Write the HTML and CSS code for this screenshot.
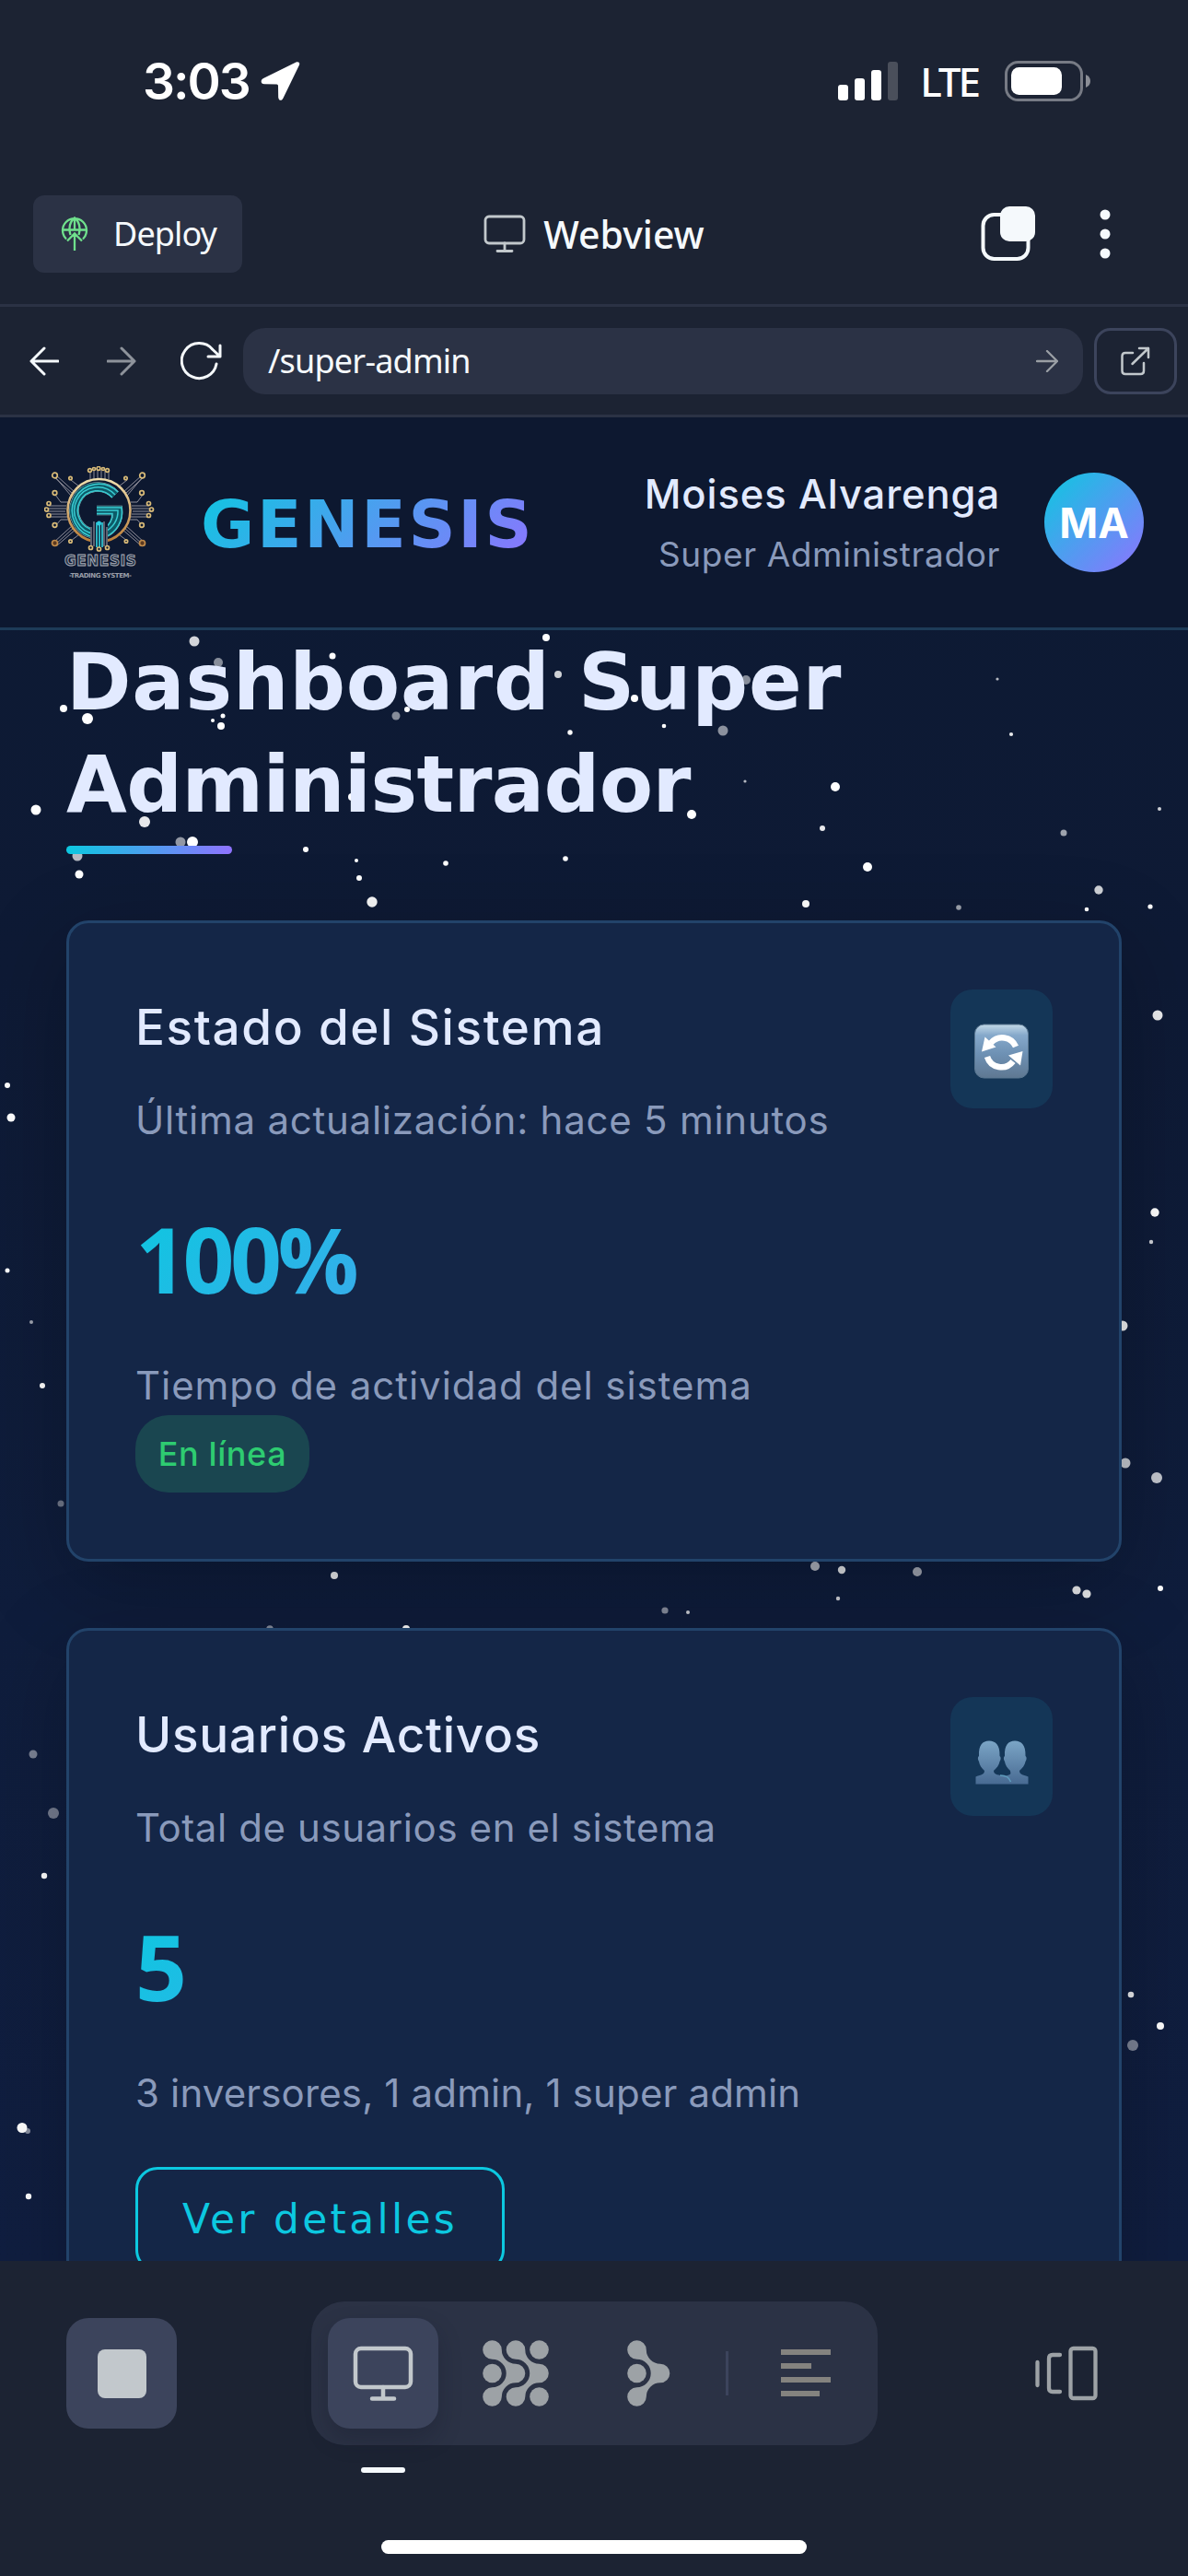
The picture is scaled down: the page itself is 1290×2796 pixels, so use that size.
FILE: index.html
```html
<!DOCTYPE html>
<html lang="es">
<head>
<meta charset="utf-8">
<title>Genesis - Super Admin</title>
<link rel="stylesheet" href="styles.css">
</head>
<body>
<div class="screen">
  <div class="status">
    <span class="time">3:03</span>
    <svg class="locate" width="44" height="44" viewBox="0 0 44 44"><path d="M42 4.500C43 2 41 .5 38.500 1.500L3 19C-.5 21 0 25 4 25.200L17.500 25.500Q19 25.500 19 27L19.200 39.500C19.500 43.500 23 44 24.500 40.500Z" fill="#fff"/></svg>
    <svg class="signal" width="66" height="42" viewBox="0 0 66 42"><g fill="#fff"><rect x="0" y="25" width="11" height="17" rx="3"/><rect x="18" y="18" width="11" height="24" rx="3"/><rect x="36" y="9" width="11" height="33" rx="3"/></g><rect x="54" y="0" width="11" height="42" rx="3" fill="#4a4f5b"/></svg>
    <span class="lte">LTE</span>
    <svg class="battery" width="94" height="44" viewBox="0 0 94 44"><rect x="1.500" y="1.500" width="82" height="41" rx="13" fill="none" stroke="#777b85" stroke-width="3"/><rect x="7" y="7" width="55" height="30" rx="8.500" fill="#fff"/><path d="M88 15q5 2 5 7t-5 7z" fill="#8b8e96"/></svg>
  </div>

  <div class="topbar">
    <div class="deploy">
      <svg width="30" height="38" viewBox="0 0 30 38" fill="none" stroke="#6fe08c" stroke-width="2.300"><path d="M6 24.500A13 13 0 1 1 24 24.500M1.500 14.500H28.500M10.500 20C8.500 13 9.500 6 15 1.500C20.500 6 21.500 13 19.500 20M15 1.500V14M15 37V18M7 26.500L15 18.500L23 26.500"/></svg>
      <span>Deploy</span>
    </div>
    <div class="title">
      <svg width="46" height="42" viewBox="0 0 46 42" fill="none" stroke="#c2c8cc" stroke-width="2.800" stroke-linecap="round"><rect x="2" y="2" width="42" height="29" rx="4"/><path d="M23 31V39M15 39.500H31"/></svg>
      <span>Webview</span>
    </div>
    <div class="actions">
      <svg width="60" height="60" viewBox="0 0 60 60"><rect x="2.500" y="9" width="49" height="48" rx="12" fill="none" stroke="#f5f9fc" stroke-width="4"/><rect x="21" y="0" width="38" height="38" rx="10" fill="#f5f9fc"/></svg>
      <svg width="12" height="54" viewBox="0 0 12 54" fill="#f5f9fc"><circle cx="6" cy="6" r="5.500"/><circle cx="6" cy="27" r="5.500"/><circle cx="6" cy="48" r="5.500"/></svg>
    </div>
  </div>

  <div class="toolbar">
    <svg class="nav" width="32" height="32" viewBox="0 0 32 32" fill="none" stroke="#f5f9fc" stroke-width="3" stroke-linecap="round" stroke-linejoin="round"><path d="M31 16H2M16 2L2 16L16 30"/></svg>
    <svg class="nav forward" width="32" height="32" viewBox="0 0 32 32" fill="none" stroke="#8e939b" stroke-width="3" stroke-linecap="round" stroke-linejoin="round"><path d="M1 16H30M16 2L30 16L16 30"/></svg>
    <svg class="reload" width="45" height="42" viewBox="0 0 45 42" fill="none" stroke="#f5f9fc" stroke-width="3" stroke-linecap="round" stroke-linejoin="round"><path d="M39 24A19 19 0 1 1 35 8.500L43 16M43 4V16H30"/></svg>
    <div class="address">
      <span>/super-admin</span>
      <svg width="24" height="24" viewBox="0 0 24 24" fill="none" stroke="#9a9fa5" stroke-width="2.300" stroke-linecap="round" stroke-linejoin="round"><path d="M1 12H23M12 1L23 12L12 23"/></svg>
    </div>
    <div class="external">
      <svg width="32" height="32" viewBox="0 0 32 32" fill="none" stroke="#c2c8cc" stroke-width="2.500" stroke-linecap="round" stroke-linejoin="round"><path d="M13 7H5Q1.500 7 1.500 10.500V26.500Q1.500 30 5 30H21.500Q25 30 25 26.500V18M12.500 19L30 2M20 2H30V12"/></svg>
    </div>
  </div>

  <div class="app">
    <svg class="stars" width="1290" height="2001" viewBox="0 453 1290 2001" fill="#fff">
      <circle cx="211" cy="696" r="5.500" opacity=".82"/><circle cx="593" cy="692" r="4"/><circle cx="237" cy="719" r="5" opacity=".5"/><circle cx="361" cy="712" r="3.500"/><circle cx="606" cy="732" r="4" opacity=".8"/><circle cx="184" cy="738" r="3.500"/><circle cx="1083" cy="737" r="1.600" opacity=".7"/><circle cx="69" cy="769" r="4"/><circle cx="95" cy="780" r="6"/><circle cx="430" cy="777" r="4.500" opacity=".5"/><circle cx="442" cy="770" r="3"/><circle cx="689" cy="758" r="4"/><circle cx="810" cy="738" r="5" opacity=".5"/><circle cx="242" cy="777" r="2.500"/><circle cx="231" cy="782" r="2"/><circle cx="240" cy="788" r="4"/><circle cx="721" cy="788" r="2.300"/><circle cx="785" cy="793" r="5.500" opacity=".52"/><circle cx="619" cy="795" r="2.700"/><circle cx="1098" cy="797" r="2.100" opacity=".9"/>
      <circle cx="809" cy="848" r="1.600" opacity=".7"/><circle cx="631" cy="848" r="4.500" opacity=".5"/><circle cx="382" cy="865" r="4"/><circle cx="907" cy="854" r="5"/><circle cx="1259" cy="878" r="2" opacity=".8"/><circle cx="39" cy="879" r="5.500"/><circle cx="751" cy="884" r="5"/><circle cx="157" cy="892" r="6" opacity=".9"/><circle cx="893" cy="899" r="3" opacity=".9"/><circle cx="1155" cy="904" r="3.500" opacity=".6"/><circle cx="196" cy="914" r="5.500" opacity=".55"/><circle cx="209" cy="914" r="6"/><circle cx="332" cy="922" r="3"/><circle cx="387" cy="934" r="2"/><circle cx="484" cy="937" r="2.800"/><circle cx="614" cy="932" r="2.800"/><circle cx="84" cy="929" r="5.500" opacity=".7"/><circle cx="86" cy="949" r="4.500"/><circle cx="390" cy="953" r="3"/><circle cx="942" cy="941" r="5"/>
      <circle cx="404" cy="979" r="5.700" opacity=".97"/><circle cx="875" cy="981" r="4"/><circle cx="1193" cy="966" r="4.700" opacity=".8"/><circle cx="1041" cy="985" r="2.800" opacity=".6"/><circle cx="1180" cy="987" r="2.300"/><circle cx="1249" cy="984" r="2.600"/><circle cx="1257" cy="1102" r="5.500" opacity=".92"/><circle cx="1254" cy="1316" r="4.700"/><circle cx="1250" cy="1348" r="2.200" opacity=".8"/><circle cx="1219" cy="1439" r="5.500" opacity=".92"/><circle cx="1222" cy="1588" r="5.500" opacity=".75"/><circle cx="1256" cy="1604" r="6" opacity=".75"/><circle cx="66" cy="1632" r="3.500" opacity=".4"/><circle cx="8" cy="1178" r="3"/><circle cx="12" cy="1213" r="4.500"/><circle cx="8" cy="1379" r="2.500"/><circle cx="34" cy="1435" r="2" opacity=".6"/><circle cx="46" cy="1504" r="3"/>
      <circle cx="363" cy="1710" r="4" opacity=".9"/><circle cx="885" cy="1700" r="5" opacity=".65"/><circle cx="914" cy="1704" r="4.200" opacity=".85"/><circle cx="996" cy="1706" r="5" opacity=".6"/><circle cx="1169" cy="1726" r="4.600" opacity=".9"/><circle cx="1180" cy="1730" r="4.600" opacity=".92"/><circle cx="1260" cy="1724" r="3"/><circle cx="910" cy="1735" r="2.200" opacity=".8"/><circle cx="722" cy="1748" r="3.600" opacity=".5"/><circle cx="747" cy="1750" r="2" opacity=".8"/><circle cx="293" cy="1768" r="3.800" opacity=".5"/><circle cx="441" cy="1768" r="4"/><circle cx="36" cy="1904" r="4.500" opacity=".45"/><circle cx="58" cy="1968" r="6" opacity=".42"/><circle cx="48" cy="2036" r="3.200"/><circle cx="1228" cy="2165" r="3.300" opacity=".9"/><circle cx="1260" cy="2199" r="4"/><circle cx="1230" cy="2220" r="6" opacity=".45"/><circle cx="30" cy="2313" r="3" opacity=".5"/><circle cx="24" cy="2309.500" r="5.500"/><circle cx="31" cy="2384" r="3.200"/>
    </svg>

    <header class="header">
      <svg class="logo" width="120" height="122" viewBox="0 0 120 122">
        <defs>
          <linearGradient id="gold" x1="0" y1="0" x2="0" y2="1"><stop offset="0" stop-color="#f0dfae"/><stop offset="1" stop-color="#bb7d38"/></linearGradient>
        </defs>
        <g fill="none" stroke="#8e8d99" stroke-width="1">
          <path d="M50 14V5M54 14V5M58 13V4M62 13V4M66 14V5M70 14V5"/>
          <path d="M33 28L12 9M31 30L10 11M29 32L13 13M86 28L107 9M88 30L109 11M90 32L106 13M33 66L12 85M31 64L10 83M35 68L14 86M86 66L107 85M88 64L109 83M84 68L105 86"/>
          <path d="M26 39H18L12 31M24 43H5M24 46H4M23 49H2M24 52H4M25 55H5M26 58H18L12 65M94 39H101L107 31M95 43H114M95 46H115M96 49H117M95 52H115M94 55H114M93 58H101L107 65M38 22L29 15M81 22L90 15M38 74L29 81M81 74L90 81"/>
        </g>
        <circle cx="59.500" cy="48" r="34" fill="#0d1830" stroke="url(#gold)" stroke-width="2.600"/>
        <g fill="none" stroke="#8fb9bd" stroke-width="10.500"><path d="M77 31A25.500 25.500 0 1 0 56 73.500M65 73A25 25 0 0 0 80 48H57" /></g>
        <g fill="none" stroke="#0c5a68" stroke-width="9.500"><path d="M77 31A25.500 25.500 0 1 0 56 73.500M65 73A25 25 0 0 0 80 48H57"/></g>
        <g fill="none" stroke="#38cbd2" stroke-width="1.500"><path d="M80 28A29 29 0 1 0 55 77M77 31A25.500 25.500 0 1 0 55 73.500M74 34A21.500 21.500 0 1 0 55 69.500M66 77A29 29 0 0 0 84 45H57M66 71A24 24 0 0 0 80 48H57M66 67A20 20 0 0 0 74 51.500H57"/></g>
        <path d="M50 61H69V86H50Z" fill="#0d1830"/>
        <g fill="none" stroke="#91939c" stroke-width="1.200"><path d="M51 66V86M54 60V87M65 60V87M68 66V86"/></g>
        <path d="M57 61V88M60 61V88M63 61V88" stroke="#2fc2cf" stroke-width="1.800"/>
        <circle cx="59.500" cy="62" r="2.500" fill="#2ccbe0"/>
        <g fill="#0d1830" stroke="#d9bb78" stroke-width="1.700"><circle cx="11.500" cy="10" r="2.800"/><circle cx="106.500" cy="10" r="2.800"/><circle cx="11.500" cy="29" r="2.300"/><circle cx="106" cy="29" r="2.300"/><circle cx="5" cy="40.500" r="2"/><circle cx="2.500" cy="47" r="2"/><circle cx="5" cy="53.500" r="2"/><circle cx="113.500" cy="40.500" r="2"/><circle cx="116.500" cy="47" r="2"/><circle cx="113.500" cy="53.500" r="2"/><circle cx="11.500" cy="64" r="2.300"/><circle cx="106" cy="64" r="2.300"/><circle cx="28.500" cy="13" r="1.700"/><circle cx="88.500" cy="13" r="1.700"/><circle cx="28.500" cy="81.500" r="1.700"/><circle cx="89" cy="81.500" r="1.700"/><circle cx="49.500" cy="4.500" r="1.900"/><circle cx="54" cy="3" r="1.500"/><circle cx="59" cy="2.400" r="1.900"/><circle cx="64" cy="3" r="1.500"/><circle cx="68.500" cy="4.500" r="1.900"/><circle cx="50.500" cy="88.500" r="2"/><circle cx="59.500" cy="90" r="2"/><circle cx="68.500" cy="88.500" r="2"/></g>
        <g fill="#5c3a20" stroke="#c08b4b" stroke-width="1.700"><circle cx="11.500" cy="83.500" r="3"/><circle cx="106.500" cy="83.500" r="3"/></g>
        <text x="22" y="107.500" class="logo-name" textLength="78">GENESIS</text>
        <text x="27" y="121" class="logo-sub" textLength="68">-TRADING SYSTEM-</text>
      </svg>
      <span class="brand">GENESIS</span>
      <div class="user">
        <div class="user-name">Moises Alvarenga</div>
        <div class="user-role">Super Administrador</div>
      </div>
      <div class="avatar">MA</div>
    </header>

    <main class="main">
      <h1>Dashboard Super<br><span class="tight">Administrador</span></h1>
      <div class="rule"></div>

      <section class="card">
        <div class="card-head">
          <div>
            <h2 class="estado">Estado del Sistema</h2>
            <p class="sub">Última actualización: hace 5 minutos</p>
          </div>
          <div class="icon">
            <svg width="60" height="60" viewBox="0 0 60 60">
              <defs><linearGradient id="key" x1="0" y1="0" x2="0" y2="1"><stop offset="0" stop-color="#c3d9e8"/><stop offset=".2" stop-color="#86a9cb"/><stop offset=".55" stop-color="#6e91b4"/><stop offset="1" stop-color="#5f7892"/></linearGradient></defs>
              <rect x=".5" y="1" width="58" height="58" rx="10" fill="url(#key)" stroke="#5b7892" stroke-width="1"/>
              <g fill="none" stroke="#fff" stroke-width="6.500"><path d="M45 25A16 16 0 0 0 18 21"/><path d="M14 36A16 16 0 0 0 42 41"/></g>
              <path d="M11.500 14.500L8 30.500L23.500 25.500ZM52.500 30L37 34.500L50 45.500Z" fill="#fff"/>
            </svg>
          </div>
        </div>
        <div class="value">100%</div>
        <p class="desc">Tiempo de actividad del sistema</p>
        <span class="badge">En línea</span>
      </section>

      <section class="card">
        <div class="card-head">
          <div>
            <h2 class="usuarios">Usuarios Activos</h2>
            <p class="sub total">Total de usuarios en el sistema</p>
          </div>
          <div class="icon">
            <svg width="60" height="60" viewBox="0 0 60 60">
              <defs><linearGradient id="bust" x1="0" y1="0" x2="0" y2="1"><stop offset="0" stop-color="#7ba5c6"/><stop offset="1" stop-color="#486a92"/></linearGradient></defs>
              <path d="M1.500 57.500V49.500C6 47 11 48 11 43C8 40 5.500 37 5 33C3.500 31 3.500 28 5 27C4.500 15 9 10.500 16 10.500C23 10.500 28 15 27.500 27C29 28 29 31 27.500 33C27 37 24 40 21 43C21 48 27 47 32 49L36 48C41 47 39 45 39 43C36 40 33.500 37 33 33C31.500 31 31.500 28 33 27C32.500 15 37 10.500 44 10.500C51 10.500 56 15 55.500 27C57 28 57 31 55.500 33C55 37 52 40 49 43C49 48 54 47 58.500 49.500V57.500Z" fill="url(#bust)"/>
              <path d="M28 48C34 48 38 50 39.500 55" fill="none" stroke="#5f9cbd" stroke-width="1.500"/>
            </svg>
          </div>
        </div>
        <div class="value">5</div>
        <p class="desc inv">3 inversores, 1 admin, 1 super admin</p>
        <button class="details">Ver detalles</button>
      </section>
    </main>
  </div>

  <footer class="dock">
    <div class="dock-row">
      <div class="stop"><div class="stop-mark"></div></div>
      <div class="tabs">
        <div class="tab active"><svg width="66" height="60" viewBox="0 0 66 60" fill="none" stroke="#c2c8cc" stroke-width="4.500" stroke-linecap="round"><rect x="3" y="3" width="60" height="42" rx="6"/><path d="M33 45V57M21 57.500H45"/></svg></div>
        <div class="tab"><svg width="72" height="72" viewBox="-10.500 -10.500 72 72" fill="#9da2a6"><path id="node" d="M10.300 0A15.200 15.200 0 0 0 25.500 15.200A10.300 10.300 0 0 1 25.500 35.800A15.200 15.200 0 0 0 10.300 51A10.300 10.300 0 1 1 0 40.700A15.200 15.200 0 0 0 0 10.300A10.300 10.300 0 1 1 10.300 0Z"/><use href="#node" x="25.500"/><circle cx="0" cy="25.500" r="10.300"/><circle cx="51" cy="0" r="10.300"/><circle cx="51" cy="51" r="10.300"/></svg></div>
        <div class="tab"><svg width="47" height="72" viewBox="-10.500 -10.500 47 72" fill="#9da2a6"><use href="#node"/><circle cx="0" cy="25.500" r="10.300"/></svg></div>
        <div class="divider"></div>
        <div class="tab"><svg width="54" height="54" viewBox="0 0 54 54" fill="#84837f"><rect y="1" width="54" height="6"/><rect y="16" width="33" height="6"/><rect y="31" width="54" height="6"/><rect y="46" width="42" height="6"/></svg></div>
      </div>
      <svg class="panes" width="68" height="60" viewBox="0 0 68 60" fill="none" stroke="#9da2a6" stroke-width="4.300" stroke-linecap="round"><path d="M2.500 18V43M27 10H19Q15 10 15 14V46Q15 50 19 50H27"/><rect x="38.500" y="3" width="27" height="54" rx="3"/></svg>
    </div>
    <div class="indicator"></div>
    <div class="home"></div>
  </footer>
</div>
</body>
</html>
```
FILE: styles.css
```css
* { box-sizing: border-box; }
body { margin: 0; background: #1c2333; }
h1, h2, p { margin: 0; }
svg { display: block; flex: none; }

.screen {
  width: 1290px;
  height: 2796px;
  display: flex;
  flex-direction: column;
  overflow: hidden;
  background: #1c2333;
  color: #f5f9fc;
  font-family: Inter, "Liberation Sans", sans-serif;
}

/* Phone status bar */
.status { height: 175px; display: flex; align-items: center; padding: 0 105px 0 155px; }
.time { font-size: 55px; font-weight: 600; letter-spacing: -2px; color: #fff; width: 128px; }
.signal { margin-left: auto; }
.lte { font: 500 44px/1 "Noto Sans", sans-serif; letter-spacing: -3px; color: #fff; margin: 0 29px 0 23px; }

/* Webview title bar */
.topbar {
  height: 158px;
  border-bottom: 3px solid #2b3245;
  display: grid;
  grid-template-columns: 1fr auto 1fr;
  align-items: center;
  padding: 2px 84px 0 36px;
  font-family: "Noto Sans", sans-serif;
}
.deploy {
  width: 227px;
  height: 84px;
  display: flex;
  align-items: center;
  gap: 27px;
  padding-left: 30px;
  border-radius: 12px;
  background: #2b3245;
  font-size: 36px;
  letter-spacing: -.9px;
}
.title { display: flex; align-items: center; gap: 19px; margin-left: 48px; font-size: 41px; font-weight: 500; }
.actions { display: flex; align-items: center; justify-content: flex-end; gap: 69px; }

/* Navigation bar */
.toolbar {
  height: 120px;
  border-bottom: 3px solid #2b3245;
  display: flex;
  align-items: center;
  padding: 0 12px 0 32px;
}
.forward { margin-left: 52px; }
.reload { margin: 0 23px 0 48px; }
.address {
  width: 912px;
  height: 72px;
  display: flex;
  align-items: center;
  justify-content: space-between;
  padding: 0 27px;
  border-radius: 24px;
  background: #2b3245;
  font: 400 36px/1 "Noto Sans", sans-serif;
  letter-spacing: -.8px;
}
.external {
  width: 90px;
  height: 72px;
  margin-left: 12px;
  display: grid;
  place-items: center;
  border: 3px solid #3c445c;
  border-radius: 18px;
}

/* Application */
.app {
  height: 2001px;
  position: relative;
  overflow: hidden;
  background: linear-gradient(180deg, #0d1a33 0%, #0e1a35 30%, #0f1d3c 65%, #101e40 100%);
}
.stars { position: absolute; inset: 0; }
.header {
  position: relative;
  height: 231px;
  display: flex;
  align-items: center;
  padding: 0 48px;
  background: #0d1830;
  border-bottom: 3px solid #1d3b58;
}
.logo-name { font: 700 15.500px "DejaVu Sans", sans-serif; fill: #233247; stroke: #a9acb6; stroke-width: .9px; }
.logo-sub { font: 700 7px "DejaVu Sans", sans-serif; fill: #9b9fa9; }
.brand {
  margin-left: 50px;
  padding-top: 6px;
  font: 700 71px/90px "DejaVu Sans", sans-serif;
  letter-spacing: 2.700px;
  background: linear-gradient(135deg, #0cc8e0, #8f73ff);
  background-clip: text;
  -webkit-background-clip: text;
  color: transparent;
}
.user { margin-left: auto; padding-top: 3px; text-align: right; white-space: nowrap; }
.user-name { font-size: 43.500px; font-weight: 500; line-height: 66px; letter-spacing: .900px; color: #e2eaff; }
.user-role { font-size: 37px; line-height: 66px; letter-spacing: .600px; color: #8a9abb; }
.avatar {
  width: 108px;
  height: 108px;
  margin-left: 48px;
  border-radius: 50%;
  display: grid;
  place-items: center;
  background: linear-gradient(135deg, #0cc8e0, #8f73ff);
  color: #fff;
  font-size: 45px;
  font-weight: 700;
}

.main { position: relative; padding: 1px 72px 0; }
h1 { height: 223px; font: 700 85px/111px "DejaVu Sans", sans-serif; letter-spacing: .8px; color: #e2eaff; white-space: nowrap; }
.tight { letter-spacing: -.6px; }
.rule { width: 180px; height: 9px; margin: 10px 0 72px; border-radius: 5px; background: linear-gradient(90deg, #0cc8e0, #8f73ff); }

.card {
  height: 696px;
  margin-bottom: 72px;
  padding: 72px;
  border: 3px solid #22436a;
  border-radius: 24px;
  background: #142647;
  box-shadow: 0 24px 96px rgba(0, 0, 0, .24);
}
.card + .card { height: 900px; }
.card-head { display: flex; justify-content: space-between; align-items: flex-start; height: 174px; white-space: nowrap; }
h2 { font-size: 53px; font-weight: 500; line-height: 83px; color: #e2eaff; }
.estado { letter-spacing: 1.600px; }
.usuarios { letter-spacing: .750px; }
.sub, .desc { font-size: 42px; line-height: 67px; letter-spacing: .750px; color: #8a9abb; }
.sub { margin-top: 25px; }
.total { letter-spacing: .600px; }
.icon {
  width: 111px;
  height: 129px;
  padding-top: 5px;
  display: grid;
  place-items: center;
  border-radius: 24px;
  background: #143657;
}
.value {
  margin-top: 44px;
  font: 700 98px/148px "Open Sans", sans-serif;
  letter-spacing: -4.500px;
  background: linear-gradient(135deg, #0cc8e0, #8f73ff);
  background-clip: text;
  -webkit-background-clip: text;
  color: transparent;
}
.desc { margin-top: 30px; margin-bottom: -1px; letter-spacing: .950px; }
.inv { letter-spacing: .150px; }
.badge {
  display: block;
  width: 189px;
  height: 84px;
  border-radius: 36px;
  background: #1a4650;
  color: #2ecc71;
  text-align: center;
  font-size: 36px;
  font-weight: 500;
  line-height: 84px;
  letter-spacing: .6px;
}
.details {
  width: 401px;
  height: 114px;
  margin-top: 48px;
  padding: 0;
  border: 3px solid #0cc8e0;
  border-radius: 24px;
  background: none;
  color: #0cc8e0;
  font: 400 44px/1 "DejaVu Sans", sans-serif;
  letter-spacing: 3.300px;
}

/* Bottom dock */
.dock { height: 342px; padding-top: 44px; }
.dock-row { height: 156px; display: flex; align-items: center; padding-left: 72px; }
.stop { width: 120px; height: 120px; display: grid; place-items: center; border-radius: 24px; background: #3c445c; }
.stop-mark { width: 53px; height: 53px; border-radius: 8px; background: #c2c8cc; }
.tabs {
  width: 615px;
  height: 156px;
  margin-left: 146px;
  padding: 18px;
  display: flex;
  align-items: center;
  justify-content: space-between;
  border-radius: 36px;
  background: #2b3245;
}
.tab { width: 120px; height: 120px; display: grid; place-items: center; border-radius: 24px; }
.active { background: #3c445c; box-shadow: 0 12px 24px rgba(14, 21, 37, .25); }
.divider { width: 3px; height: 48px; background: #3c445c; }
.panes { margin-left: 171px; }
.indicator { width: 48px; height: 6px; margin: 24px 0 0 392px; border-radius: 3px; background: #f5f9fc; }
.home { width: 462px; height: 15px; margin: 73px auto 0; border-radius: 8px; background: #fff; }
```
